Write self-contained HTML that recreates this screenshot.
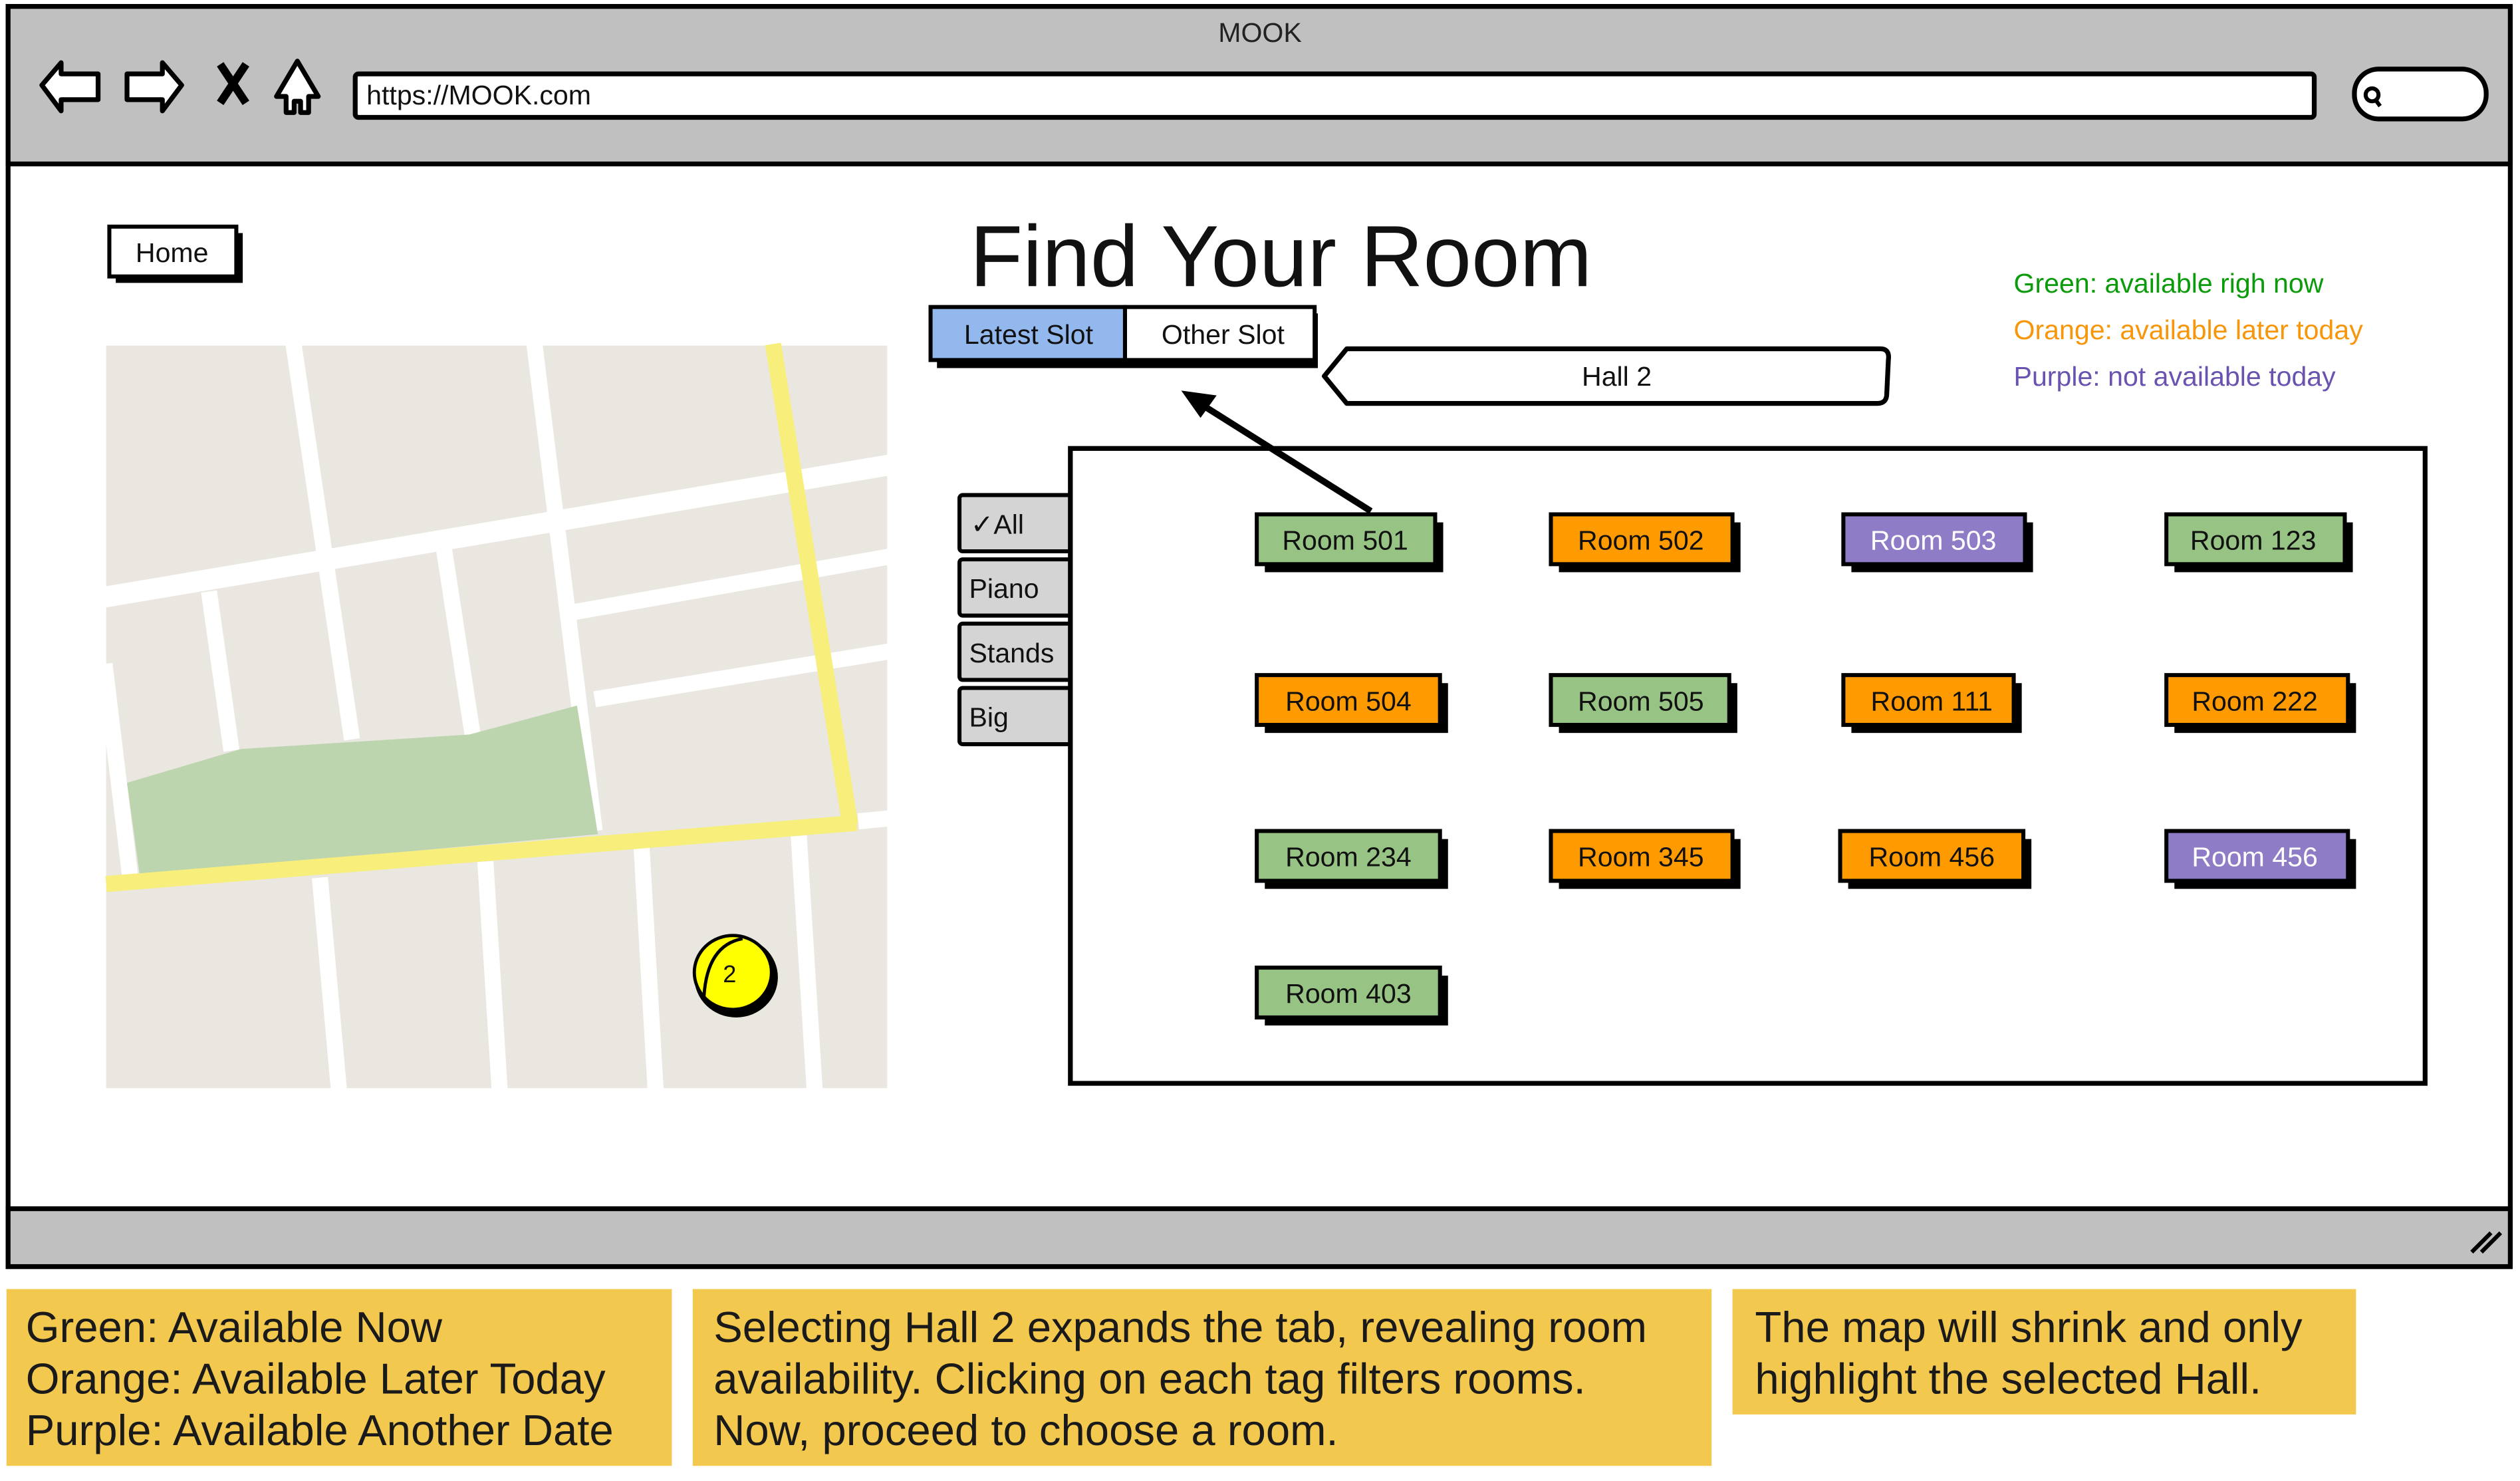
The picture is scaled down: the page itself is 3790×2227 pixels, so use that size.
<!DOCTYPE html>
<html><head><meta charset="utf-8"><style>
html,body{margin:0;padding:0;background:#fff;}
svg{display:block;}
text{font-family:"Liberation Sans",sans-serif;}
</style></head><body>
<svg width="3790" height="2227" viewBox="0 0 1568 921.4" xmlns="http://www.w3.org/2000/svg">
<rect width="1568" height="922" fill="#fff"/>
<!-- browser frame -->
<rect x="5" y="4" width="1557" height="784" fill="#fff" stroke="#000" stroke-width="3"/>
<rect x="5" y="4" width="1557" height="98" fill="#c0c0c0" stroke="#000" stroke-width="3"/>
<rect x="5" y="752" width="1557" height="36" fill="#c0c0c0" stroke="#000" stroke-width="3"/>
<path d="M1538 779 L1550 767 M1544 779 L1556 767" stroke="#000" stroke-width="2.5"/>
<text x="784" y="26" font-size="17" text-anchor="middle" fill="#222">MOOK</text>
<!-- toolbar icons -->
<path d="M26 53 L38 39 L38 46 L61 46 L61 62 L38 62 L38 69 Z" fill="#fff" stroke="#000" stroke-width="3" stroke-linejoin="round"/>
<path d="M113 53 L101 39 L101 46 L79 46 L79 62 L101 62 L101 69 Z" fill="#fff" stroke="#000" stroke-width="3" stroke-linejoin="round"/>
<path d="M137 40 L153 64 M153 40 L137 64" stroke="#000" stroke-width="5"/>
<path d="M185 38 L198 60 L192 60 L192 70 L187 70 L187 63 L183 63 L183 70 L178 70 L178 60 L172 60 Z" fill="#fff" stroke="#000" stroke-width="3" stroke-linejoin="round"/>
<rect x="221" y="46" width="1219" height="27" rx="2" fill="#fff" stroke="#000" stroke-width="3"/>
<text x="228" y="65" font-size="17" fill="#111">https://MOOK.com</text>
<rect x="1465" y="43" width="82" height="31" rx="15" fill="#fff" stroke="#000" stroke-width="3"/>
<circle cx="1476" cy="59" r="4" fill="none" stroke="#000" stroke-width="2.5"/>
<path d="M1478 62 L1481 66" stroke="#000" stroke-width="2.5"/>
<!-- Home -->
<rect x="72" y="145" width="79" height="31" fill="#000"/>
<rect x="68" y="141" width="79" height="31" fill="#fff" stroke="#000" stroke-width="2.5"/>
<text x="107" y="163" font-size="17" text-anchor="middle" fill="#111">Home</text>
<!-- title -->
<text x="797" y="178" font-size="54" text-anchor="middle" fill="#111">Find Your Room</text>
<!-- tabs -->
<rect x="583" y="195" width="237" height="34" fill="#000"/>
<rect x="579" y="191" width="121" height="33" fill="#93b8ee" stroke="#000" stroke-width="2.5"/>
<rect x="700" y="191" width="118" height="33" fill="#fff" stroke="#000" stroke-width="2.5"/>
<text x="640" y="214" font-size="17" text-anchor="middle" fill="#111">Latest Slot</text>
<text x="761" y="214" font-size="17" text-anchor="middle" fill="#111">Other Slot</text>
<!-- Hall 2 -->
<path d="M838 217 L1170 217 Q1176 217 1175 224 L1174 245 Q1174 251 1168 251 L838 251 L824 234 Z" fill="#fff" stroke="#000" stroke-width="3" stroke-linejoin="round"/>
<text x="1006" y="240" font-size="17" text-anchor="middle" fill="#111">Hall 2</text>
<!-- legend -->
<text x="1253" y="182" font-size="17" fill="#0a9a0a">Green: available righ now</text>
<text x="1253" y="211" font-size="17" fill="#f7960a">Orange: available later today</text>
<text x="1253" y="240" font-size="17" fill="#6a52b0">Purple: not available today</text>
<!-- map -->
<rect x="66" y="215" width="486" height="462" fill="#e9e7e0"/>
<g stroke="#fff" stroke-width="10" fill="none">
<path d="M182 210 L219 460"/>
<path d="M199 546 L211 680"/>
<path d="M332 210 L370 517"/>
<path d="M302 536 L311 680"/>
<path d="M399 524 L408 680"/>
<path d="M497 520 L507 680"/>
<path d="M130 368 L144 467"/>
<path d="M276 340 L294 457"/>
<path d="M65 413 L81 546"/>
<path d="M62 372 L555 289" stroke-width="13"/>
<path d="M356 381 L555 346"/>
<path d="M370 435 L555 405"/>
<path d="M534 511 L555 509"/>
</g>
<path d="M79 487 L150 466 L292 457 L359 439 L372 519 L87 545 Z" fill="#bdd5ae"/>
<g stroke="#f8ee7b" stroke-width="10" fill="none">
<path d="M481 214 L529 513"/>
<path d="M66 550 L533 512"/>
</g>
<ellipse cx="458" cy="608" rx="26" ry="25" fill="#000"/>
<ellipse cx="456" cy="605" rx="24" ry="23" fill="#ffff00" stroke="#000" stroke-width="2"/>
<path d="M438 620 Q440 588 462 584" stroke="#000" stroke-width="2" fill="none"/>
<text x="454" y="611" font-size="15" text-anchor="middle" fill="#111">2</text>
<!-- side tabs -->
<g fill="#d4d4d4" stroke="#000" stroke-width="2.5">
<rect x="597" y="308" width="72" height="35" rx="2"/>
<rect x="597" y="348" width="72" height="35" rx="2"/>
<rect x="597" y="388" width="72" height="35" rx="2"/>
<rect x="597" y="428" width="72" height="35" rx="2"/>
</g>
<g font-size="17" fill="#111">
<text x="604" y="332">✓All</text>
<text x="603" y="372">Piano</text>
<text x="603" y="412">Stands</text>
<text x="603" y="452">Big</text>
</g>
<!-- panel -->
<rect x="666" y="279" width="843" height="395" fill="#fff" stroke="#000" stroke-width="3"/>
<!-- arrow -->
<path d="M853 318 L745 250" stroke="#000" stroke-width="4"/>
<path d="M735 243 L757 246 L747 260 Z" fill="#000"/>
<!-- room tags -->
<g font-size="17" text-anchor="middle" stroke-width="2.5">
<g><rect x="787" y="325" width="111" height="31" fill="#000"/><rect x="782" y="320" width="111" height="31" fill="#97c484" stroke="#000"/><text x="837" y="342" stroke="none" fill="#111">Room 501</text></g>
<g><rect x="970" y="325" width="113" height="31" fill="#000"/><rect x="965" y="320" width="113" height="31" fill="#ff9a00" stroke="#000"/><text x="1021" y="342" stroke="none" fill="#111">Room 502</text></g>
<g><rect x="1152" y="325" width="113" height="31" fill="#000"/><rect x="1147" y="320" width="113" height="31" fill="#8e7dc6" stroke="#000"/><text x="1203" y="342" stroke="none" fill="#fff">Room 503</text></g>
<g><rect x="1353" y="325" width="111" height="31" fill="#000"/><rect x="1348" y="320" width="111" height="31" fill="#97c484" stroke="#000"/><text x="1402" y="342" stroke="none" fill="#111">Room 123</text></g>

<g><rect x="787" y="425" width="114" height="31" fill="#000"/><rect x="782" y="420" width="114" height="31" fill="#ff9a00" stroke="#000"/><text x="839" y="442" stroke="none" fill="#111">Room 504</text></g>
<g><rect x="970" y="425" width="111" height="31" fill="#000"/><rect x="965" y="420" width="111" height="31" fill="#97c484" stroke="#000"/><text x="1021" y="442" stroke="none" fill="#111">Room 505</text></g>
<g><rect x="1152" y="425" width="106" height="31" fill="#000"/><rect x="1147" y="420" width="106" height="31" fill="#ff9a00" stroke="#000"/><text x="1202" y="442" stroke="none" fill="#111">Room 111</text></g>
<g><rect x="1353" y="425" width="113" height="31" fill="#000"/><rect x="1348" y="420" width="113" height="31" fill="#ff9a00" stroke="#000"/><text x="1403" y="442" stroke="none" fill="#111">Room 222</text></g>

<g><rect x="787" y="522" width="114" height="31" fill="#000"/><rect x="782" y="517" width="114" height="31" fill="#97c484" stroke="#000"/><text x="839" y="539" stroke="none" fill="#111">Room 234</text></g>
<g><rect x="970" y="522" width="113" height="31" fill="#000"/><rect x="965" y="517" width="113" height="31" fill="#ff9a00" stroke="#000"/><text x="1021" y="539" stroke="none" fill="#111">Room 345</text></g>
<g><rect x="1150" y="522" width="114" height="31" fill="#000"/><rect x="1145" y="517" width="114" height="31" fill="#ff9a00" stroke="#000"/><text x="1202" y="539" stroke="none" fill="#111">Room 456</text></g>
<g><rect x="1353" y="522" width="113" height="31" fill="#000"/><rect x="1348" y="517" width="113" height="31" fill="#8e7dc6" stroke="#000"/><text x="1403" y="539" stroke="none" fill="#fff">Room 456</text></g>

<g><rect x="787" y="607" width="114" height="31" fill="#000"/><rect x="782" y="602" width="114" height="31" fill="#97c484" stroke="#000"/><text x="839" y="624" stroke="none" fill="#111">Room 403</text></g>
</g>
<!-- notes -->
<rect x="4" y="802" width="414" height="110" fill="#f3c84e"/>
<rect x="431" y="802" width="634" height="110" fill="#f3c84e"/>
<rect x="1078" y="802" width="388" height="78" fill="#f3c84e"/>
<g font-size="27" fill="#1a1a1a">
<text x="16" y="835">Green: Available Now</text>
<text x="16" y="867">Orange: Available Later Today</text>
<text x="16" y="899">Purple: Available Another Date</text>
<text x="444" y="835">Selecting Hall 2 expands the tab, revealing room</text>
<text x="444" y="867">availability. Clicking on each tag filters rooms.</text>
<text x="444" y="899">Now, proceed to choose a room.</text>
<text x="1092" y="835">The map will shrink and only</text>
<text x="1092" y="867">highlight the selected Hall.</text>
</g>
</svg>
</body></html>
